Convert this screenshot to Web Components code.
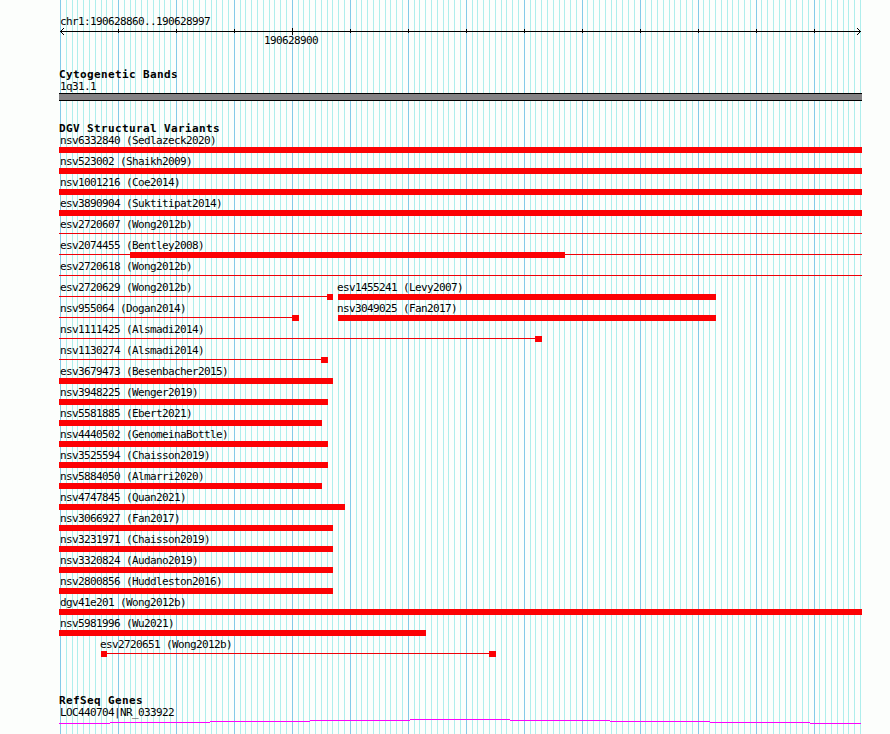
<!DOCTYPE html>
<html lang="en"><head><meta charset="utf-8"><title>Genome browser</title>
<style>body{margin:0;background:#fcfefc}</style></head><body>
<genome-view></genome-view>
<script>
// Text label in a 6px (regular) or 7px (bold) character grid
class PixelLabel extends HTMLElement {
  connectedCallback() {
    this.attachShadow({mode:'open'}).innerHTML = `<style>
      :host{display:block;width:max-content;height:12px;font:11px/14px "DejaVu Sans Mono",monospace;letter-spacing:-.622px;color:#000;white-space:pre}
      :host([bold]){font-weight:bold;letter-spacing:.378px}
      :host([raised]){line-height:12px}
    </style><slot></slot>`;
  }
}
customElements.define('pixel-label', PixelLabel);

// Vertical guide lines, one per base, darker every tenth
class GridLines extends HTMLElement {
  connectedCallback() {
    let s = '';
    for (let k = 0; k <= 138; k++) {
      const x = Math.floor(60.45 + k * 800 / 138);
      s += `<rect x="${x}" y="0" width="1" height="734" fill="${k % 10 ? '#aeeeec' : '#84cae8'}"/>`;
    }
    this.attachShadow({mode:'open'}).innerHTML = `<style>:host{display:block;position:absolute;inset:0}svg{display:block}</style>
      <svg width="890" height="734" shape-rendering="crispEdges">${s}</svg>`;
  }
}
customElements.define('grid-lines', GridLines);

class ScaleRuler extends HTMLElement {
  connectedCallback() {
    let t = '';
    for (let i = 1; i < 14; i++) {
      const big = i === 4;
      t += `<rect x="${1 + 58 * i}" y="${big ? 0 : 1}" width="1" height="${big ? 7 : 4}"/>`;
    }
    this.attachShadow({mode:'open'}).innerHTML = `<style>
      :host{display:grid;grid-template-rows:13px 7px 12px;width:803px}
      svg{display:block;overflow:visible}
      .range{padding-left:1px}.tick{padding-left:205px}</style>
      <pixel-label class="range">chr1:190628860..190628997</pixel-label>
      <svg width="803" height="7" shape-rendering="crispEdges"><rect x="1" y="3" width="801" height="1"/>${t}
      <path d="M1 3h1v1h-1zM2 2h1v1h-1zM3 1h1v1h-1zM4 0h1v1h-1zM2 4h1v1h-1zM3 5h1v1h-1zM4 6h1v1h-1zM801 3h1v1h-1zM800 2h1v1h-1zM799 1h1v1h-1zM798 0h1v1h-1zM800 4h1v1h-1zM799 5h1v1h-1zM798 6h1v1h-1z"/></svg>
      <pixel-label raised class="tick">190628900</pixel-label>`;
  }
}
customElements.define('scale-ruler', ScaleRuler);

class CytoBand extends HTMLElement {
  connectedCallback() {
    this.attachShadow({mode:'open'}).innerHTML = `<style>:host{display:block;box-sizing:border-box;height:8px;background:#848284;border:solid #000;border-width:1px 0}</style>`;
  }
}
customElements.define('cyto-band', CytoBand);

// One 21px lane; features: [label, labelX, thin|null, thick[]]
class VariantLane extends HTMLElement {
  set features(list) {
    let r = '', l = '';
    for (const [name, x, thin, thick] of list) {
      l += `<pixel-label style="grid-area:1/1;margin-left:${x - 59}px">${name}</pixel-label>`;
      if (thin) r += `<rect x="${thin[0] - 59}" y="2" width="${thin[1] - thin[0]}" height="1" fill="#f00008"/>`;
      for (const [a, b] of thick) r += `<rect x="${a - 59}" y="0" width="${b - a}" height="6" fill="#fc0204"/>`;
    }
    this.attachShadow({mode:'open'}).innerHTML = `<style>:host{display:grid;grid-template-rows:13px 8px;width:803px}.n{display:grid}svg{display:block}</style>
      <div class="n">${l}</div><svg width="803" height="6" shape-rendering="crispEdges">${r}</svg>`;
  }
}
customElements.define('variant-lane', VariantLane);

class VariantTrack extends HTMLElement {
  connectedCallback() {
    const full = n => [[n, 60, null, [[59, 862]]]];
    const to = (n, e) => [[n, 60, null, [[59, e]]]];
    const lanes = [
      full('nsv6332840 (Sedlazeck2020)'), full('nsv523002 (Shaikh2009)'),
      full('nsv1001216 (Coe2014)'), full('esv3890904 (Suktitipat2014)'),
      [['esv2720607 (Wong2012b)', 60, [59, 862], []]],
      [['esv2074455 (Bentley2008)', 60, [59, 862], [[130, 565]]]],
      [['esv2720618 (Wong2012b)', 60, [59, 862], []]],
      [['esv2720629 (Wong2012b)', 60, [59, 327], [[327, 333]]], ['esv1455241 (Levy2007)', 337, null, [[338, 716]]]],
      [['nsv955064 (Dogan2014)', 60, [59, 292], [[292, 299]]], ['nsv3049025 (Fan2017)', 337, null, [[338, 716]]]],
      [['nsv1111425 (Alsmadi2014)', 60, [59, 535], [[535, 542]]]],
      [['nsv1130274 (Alsmadi2014)', 60, [59, 321], [[321, 328]]]],
      to('esv3679473 (Besenbacher2015)', 333), to('nsv3948225 (Wenger2019)', 328),
      to('nsv5581885 (Ebert2021)', 322), to('nsv4440502 (GenomeinaBottle)', 328),
      to('nsv3525594 (Chaisson2019)', 328), to('nsv5884050 (Almarri2020)', 322),
      to('nsv4747845 (Quan2021)', 345), to('nsv3066927 (Fan2017)', 333),
      to('nsv3231971 (Chaisson2019)', 333), to('nsv3320824 (Audano2019)', 333),
      to('nsv2800856 (Huddleston2016)', 333), full('dgv41e201 (Wong2012b)'),
      to('nsv5981996 (Wu2021)', 426),
      [['esv2720651 (Wong2012b)', 100, [101, 489], [[101, 107], [489, 496]]]]
    ];
    const root = this.attachShadow({mode:'open'});
    root.innerHTML = `<style>:host{display:flex;flex-direction:column}</style>`;
    for (const f of lanes) {
      const e = document.createElement('variant-lane');
      e.features = f;
      root.append(e);
    }
  }
}
customElements.define('variant-track', VariantTrack);

class GeneTrace extends HTMLElement {
  connectedCallback() {
    const xs = [59, 110, 210, 310, 410, 510, 610, 710, 810, 861], ys = [4, 3, 2, 1, 0, 1, 2, 3, 4];
    this.attachShadow({mode:'open'}).innerHTML = `<style>:host{display:block}svg{display:block}</style>
      <svg width="803" height="5" shape-rendering="crispEdges">${ys.map((y, i) =>
        `<rect x="${xs[i] - 59}" y="${y}" width="${xs[i + 1] - xs[i]}" height="1" fill="#fc02fc"/>`).join('')}</svg>`;
  }
}
customElements.define('gene-trace', GeneTrace);

class GenomeView extends HTMLElement {
  connectedCallback() {
    this.attachShadow({mode:'open'}).innerHTML = `<style>
      :host{display:block;position:relative;width:890px;height:734px;overflow:hidden}
      main{position:relative;box-sizing:border-box;width:862px;padding:15px 0 0 59px}
      section{display:flow-root}
      .c{margin-top:21px}.d{margin-top:21px}.g{margin-top:35px}
      .sub{margin-left:1px}
      cyto-band{margin-top:1px}gene-trace{margin-top:1px}
    </style>
    <grid-lines></grid-lines>
    <main>
      <scale-ruler></scale-ruler>
      <section class="c"><pixel-label bold>Cytogenetic Bands</pixel-label><pixel-label class="sub">1q31.1</pixel-label><cyto-band></cyto-band></section>
      <section class="d"><pixel-label bold>DGV Structural Variants</pixel-label><variant-track></variant-track></section>
      <section class="g"><pixel-label bold>RefSeq Genes</pixel-label><pixel-label class="sub">LOC440704|NR_033922</pixel-label><gene-trace></gene-trace></section>
    </main>`;
  }
}
customElements.define('genome-view', GenomeView);
</script></body></html>
